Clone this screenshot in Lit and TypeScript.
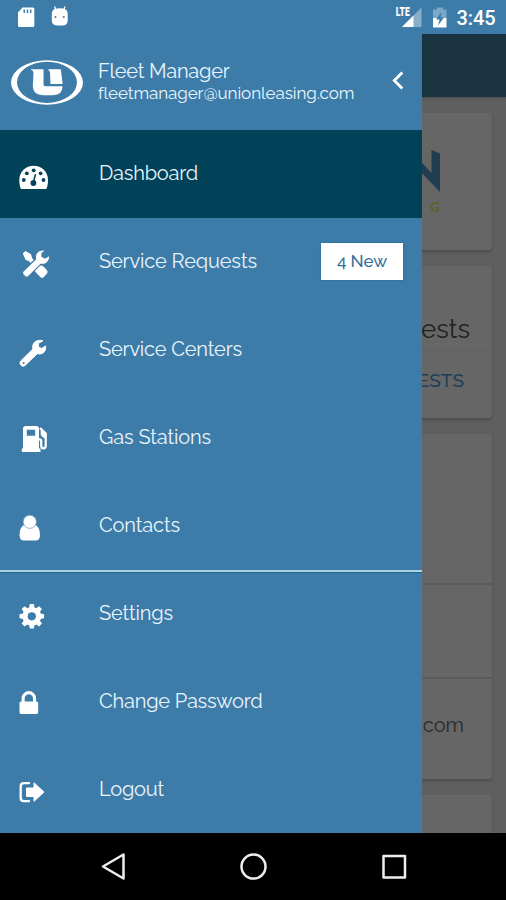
import { LitElement, html, svg, css } from "lit";
import { customElement, property } from "lit/decorators.js";

const FONT = css`"Raleway", "Lato", "Open Sans", sans-serif`;

/** Text whose tracking is adjusted so that the run takes a given width. */
@customElement("fit-text")
class FitText extends LitElement {
  @property({ type: Number }) width = 0;
  @property() text = "";
  static styles = css`
    :host { display: block; white-space: nowrap; }
  `;
  render() {
    return html`<span>${this.text}</span>`;
  }
  updated() {
    const span = this.renderRoot.querySelector("span") as HTMLElement;
    span.style.letterSpacing = "0px";
    const natural = span.getBoundingClientRect().width;
    span.style.letterSpacing = (this.width - natural) / this.text.length + "px";
  }
}

const gauge = svg`
  <path fill="#fff" d="M21 59Q19.300 56 19.300 50A14.350 14.350 0 0 1 48 50Q48 56 46.300 59Z"/>
  <g fill="#06405a"><circle cx="23.800" cy="50" r="1.900"/><circle cx="26.800" cy="43.300" r="1.900"/><circle cx="33.700" cy="40.300" r="1.900"/><circle cx="40.600" cy="43.300" r="1.900"/><circle cx="43.500" cy="50" r="1.900"/><circle cx="33.400" cy="53" r="2.900"/></g>
  <path d="M33.500 52L35.300 44.800" stroke="#06405a" stroke-width="1.500" stroke-linecap="round"/>`;

const wrenchPath = "M45.600 6.500L41.500 9L38.500 7.300V3.800L43 1.200Q36.500 -.3 33.500 4Q32 6.700 32.800 9.500L20.700 21.500Q19 23.500 20.700 25.400L21.500 26.200Q23.200 27.600 25 26L37.300 14.200Q43.500 15.500 45.300 10.500Q46 8 45.600 6.500Z";

const icons: Record<string, unknown> = {
  gauge,
  tools: svg`
    <path fill="#fff" d="M22.800 35.500L25.300 33L31 36.200L32.300 40.500L36 44.200L40 47.500Q42 47 43.500 48.500L47 52.300Q48 54 47 55.500L43.600 59.300Q42 60.500 40.500 59.300L35.500 54Q34.500 52.500 35 51L29.500 43.500L25.500 41.800Z"/>
    <path stroke="#3d7ca9" stroke-width="1.200" fill="#fff" d="M49.600 37.300L45 40L42 38.300V35.300L46.200 32.300Q39.500 31 36.300 35.300Q34.800 38 35.600 41L23.300 53Q21.700 55 23.300 57L24.800 58.500Q26.800 60.100 28.700 58.300L40.700 46.300Q46.200 47.300 48.800 42.500Q50.100 40 49.600 37.300Z"/>`,
  wrench: svg`<g transform="translate(0 33.500)"><path fill="#fff" stroke="#fff" stroke-width=".9" stroke-linejoin="round" d="${wrenchPath}"/><circle cx="23.600" cy="23.500" r="1" fill="#3d7ca9"/></g>`,
  gas: svg`
    <path fill="#fff" fill-rule="evenodd" d="M23 54.500V34.800Q23 32 25.800 32H36.200Q39 32 39 34.800V54.500H40.500V58H21.800V54.500ZM26.800 35.700V41.700H35.200V35.700Z"/>
    <path fill="none" stroke="#fff" stroke-width="2.200" d="M38 45.300H39.500Q41.200 45.300 41.200 47V51.500Q41.200 54.300 43.500 54.300Q45.700 54.300 45.700 51.500V39.500L40 34"/>
    <path fill="#fff" d="M40.700 35.500L46.500 39.500V45.500L42.500 43Q40.800 42 40.700 40Z"/>`,
  person: svg`
    <path fill="#fff" d="M25 42.500Q19.500 44.500 19.500 53Q19.500 58.500 24 58.500H35.500Q40 58.500 40 53Q40 44.500 34.500 42.500Z"/>
    <circle cx="29.800" cy="39.800" r="6.600" fill="#fff" stroke="#76a4c5" stroke-width=".8"/>`,
  cog: svg`<g transform="translate(31.800 45.300)" fill="#fff">
    ${[0, 45, 90, 135].map((a) => svg`<path transform="rotate(${a})" d="M-2 -12.300H2L3 -7V7L2 12.300H-2L-3 7V-7Z"/>`)}
    <circle r="9.400"/><circle r="4.100" fill="#3d7ca9"/></g>`,
  lock: svg`<path fill="#fff" transform="translate(19.500 30) scale(.0162)" d="M320 768h512v-192q0-106-75-181t-181-75t-181 75t-75 181v192zM1152 864v576q0 40-28 68t-68 28h-960q-40 0-68-28t-28-68v-576q0-40 28-68t68-28h32v-192q0-184 132-316t316-132t316 132t132 316v192h32q40 0 68 28t28 68z"/>`,
  logout: svg`
    <path fill="none" stroke="#fff" stroke-width="2.300" stroke-linecap="round" d="M29 36.200H24Q20.700 36.200 20.700 39.500V51Q20.700 54.200 24 54.200H29"/>
    <path fill="#fff" stroke="#fff" stroke-width="1" stroke-linejoin="round" d="M26.500 41H34V35.800L44 45.100L34 54.300V49.500H26.500Z"/>`,
};

const primary = [
  { icon: "gauge", label: "Dashboard", width: 99, active: true },
  { icon: "tools", label: "Service Requests", width: 158, badge: "4 New" },
  { icon: "wrench", label: "Service Centers", width: 143 },
  { icon: "gas", label: "Gas Stations", width: 112 },
  { icon: "person", label: "Contacts", width: 81 },
];
const secondary = [
  { icon: "cog", label: "Settings", width: 74 },
  { icon: "lock", label: "Change Password", width: 163.5 },
  { icon: "logout", label: "Logout", width: 65 },
];

@customElement("app-root")
class AppRoot extends LitElement {
  static styles = css`
    :host { display: block; }
    * { box-sizing: border-box; }
    svg { display: block; flex: none; }
    .phone { position: relative; width: 506px; height: 900px; overflow: hidden; display: grid; grid-template-rows: 34px 799px 67px; background: #000; font-family: ${FONT}; }
    .status { background: #3d7ca9; display: flex; justify-content: space-between; }
    .body { position: relative; overflow: hidden; background: #5f5f5f; }
    .appbar { height: 63px; background: #1a3340; box-shadow: 0 1px 3px #4a4a4a; }
    .cards { display: flex; flex-direction: column; gap: 16px; padding: 16px 14px 0 15px; }
    .card { background: #666; border-radius: 3px; box-shadow: 0 2px 3px #4d4d4d; display: flex; flex-direction: column; align-items: flex-end; flex: none; }
    .brand { height: 137px; padding: 31px 51px 0 0; }
    .requests { height: 152px; }
    .requests .count { height: 86px; width: 100%; border-bottom: 1px solid #626262; display: flex; justify-content: flex-end; align-items: flex-end; padding: 0 22px 7px; font-size: 26px; line-height: 30px; color: #222; }
    .requests .link { padding: 17px 28px 0; font-size: 19px; line-height: 22px; color: #203f56; font-weight: 500; }
    .info { height: 345px; }
    .info .cell { width: 100%; border-bottom: 2px solid #5b5b5b; }
    .info .tall { height: 151px; }
    .info .mid { height: 94px; }
    .info .mail { display: flex; justify-content: flex-end; padding: 34px 28px 0; font-size: 20px; line-height: 24px; color: #2a2a2a; }
    .last { height: 100px; }
    .drawer { position: absolute; left: 0; top: 0; width: 422px; height: 799px; background: #3d7ca9; color: #eaf5fc; overflow: hidden; }
    .head { height: 96px; display: flex; }
    .who { width: 282px; padding-top: 25px; }
    .name { font-size: 20px; line-height: 24px; }
    .mail-line { font-size: 17px; line-height: 20px; }
    .row { height: 88px; display: flex; align-items: flex-start; }
    .row.active { background: #014259; }
    .label { width: 222px; margin-left: 39px; padding-top: 31px; font-size: 20px; line-height: 24px; }
    .rule ~ .row .label { padding-top: 29.5px; }
    .badge { width: 82px; height: 37px; margin-top: 25px; background: #fff; color: #33709b; font-size: 17px; font-weight: 500; line-height: 37px; padding-left: 16px; box-shadow: 0 0 2px #18699a; }
    .rule { height: 2px; margin-bottom: -1px; background: #b2cfe2; box-shadow: 0 1px 1px #176a94; position: relative; }
  `;

  row(item: any) {
    return html`<div class="row ${item.active ? "active" : ""}">
      <svg width="60" height="88" viewBox="0 0 60 88">${icons[item.icon]}</svg>
      <fit-text class="label" .text=${item.label} .width=${item.width}></fit-text>
      ${item.badge ? html`<fit-text class="badge" .text=${item.badge} .width=${50}></fit-text>` : ""}
    </div>`;
  }

  render() {
    return html`<div class="phone">
      <div class="status">
        <svg width="80" height="34" viewBox="0 0 80 34">
          <path fill="#fff" fill-rule="evenodd" d="M22.500 7.500H33Q34.300 7.500 34.300 9V25.500Q34.300 27 33 27H19.500Q18 27 18 25.500V12.500ZM23.500 9.500V13H25V9.500ZM26.700 9.500V13H28.200V9.500ZM29.900 9.500V13H31.400V9.500Z"/>
          <path stroke="#fff" stroke-width="1.300" d="M54.500 6.500L56 10M65 6.500L63.500 10"/>
          <path fill="#fff" d="M54.500 9Q60 7.500 65 9Q68 10.500 67.700 15V21Q67 25.500 62.500 25.500H57Q52 25 51.800 21V15Q51.500 10.500 54.500 9Z"/>
          <circle cx="55.500" cy="17" r="1" fill="#3d7ca9"/><circle cx="63.800" cy="17" r="1" fill="#3d7ca9"/>
        </svg>
        <svg width="116" height="34" viewBox="390 0 116 34">
          <path fill="#88aecb" d="M421.500 7.500V27H402Z"/><path fill="#fff" d="M413.500 15.500V27H402Z"/>
          <text x="395.800" y="16.200" font-family="Roboto" font-weight="900" font-size="12" textLength="14" lengthAdjust="spacingAndGlyphs" fill="#fff" stroke="#3d7ca9" stroke-width="1.500" paint-order="stroke">LTE</text>
          <path fill="#7ba8c6" d="M437 7.500H443V9.500H446.500V19H433V9.500H437Z"/><path fill="#fff" d="M433 18H446.500V27.500H433Z"/>
          <path fill="#3d7ca9" d="M441.500 12L436 19.500H439.500L438 25.500L444 17.500H440.500Z"/>
          <text x="456.500" y="25" font-family="Roboto" font-weight="500" font-size="20" textLength="39" fill="#fff">3:45</text>
        </svg>
      </div>
      <div class="body">
        <div class="appbar"></div>
        <div class="cards">
          <div class="card brand">
            <svg width="90" height="80" viewBox="350 144 90 80">
              <path fill="#203d52" d="M405 149L412.500 153.500L430.500 173V150L439 153.500V192L413 165V190H405Z"/>
              <text x="429" y="212" font-family="Lato" font-weight="900" font-size="13.500" fill="#5c642c">G</text>
            </svg>
          </div>
          <div class="card requests">
            <div class="count">Service Requests</div>
            <div class="link">VIEW REQUESTS</div>
          </div>
          <div class="card info">
            <div class="cell tall"></div><div class="cell mid"></div>
            <div class="mail">unionleasing.com</div>
          </div>
          <div class="card last"></div>
        </div>
        <div class="drawer">
          <div class="head">
            <svg width="98" height="96" viewBox="0 34 98 96">
              <path fill="#fff" fill-rule="evenodd" d="M11 82.500A36 22.200 0 0 1 83 82.500A36 22.200 0 0 1 11 82.500ZM17 82.300A30 20.600 0 0 0 77 82.300A30 20.600 0 0 0 17 82.300Z"/>
              <path fill="#fff" d="M30.500 69.300H43.500V84.500Q43.500 86.300 45.500 86.300H62.500Q62.500 95.200 53 95.200H43Q33 95.200 32.800 86L33.500 73Q33.500 70.500 30.500 69.300ZM48 69.300H60.800L62.700 84H50.500L50 72Z"/>
            </svg>
            <div class="who">
              <fit-text class="name" .text=${"Fleet Manager"} .width=${131.5}></fit-text>
              <fit-text class="mail-line" .text=${"fleetmanager@unionleasing.com"} .width=${256}></fit-text>
            </div>
            <svg width="42" height="96" viewBox="380 34 42 96"><path fill="none" stroke="#fff" stroke-width="2.800" d="M402.300 72.500L394.300 80.500L402.300 88.500"/></svg>
          </div>
          ${primary.map((i) => this.row(i))}
          <div class="rule"></div>
          ${secondary.map((i) => this.row(i))}
        </div>
      </div>
      <svg width="506" height="67" viewBox="0 833 506 67" fill="none" stroke="#eee" stroke-width="2.500" stroke-linejoin="round">
        <path d="M123.500 854.500V878.500L103 866.500Z"/><circle cx="253.500" cy="866.600" r="12"/><rect x="383.500" y="856" width="21.500" height="21.500"/>
      </svg>
    </div>`;
  }
}
